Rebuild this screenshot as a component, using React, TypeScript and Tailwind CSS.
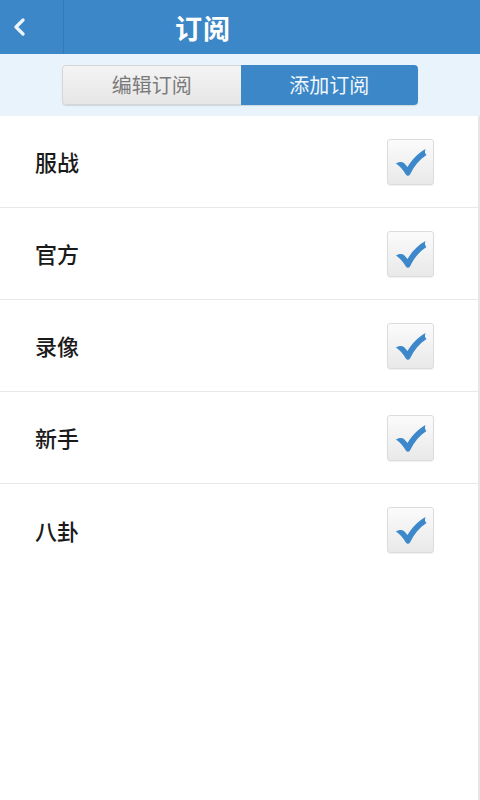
import React from "react";

const items = ["服战", "官方", "录像", "新手", "八卦"];

function CheckBox() {
  return (
    <div className="flex h-[46px] w-[47px] items-center justify-center rounded-[3px] border border-[#dcdcdc] bg-gradient-to-b from-[#fbfbfb] to-[#e9e9e9] shadow-[0_1px_1px_rgba(0,0,0,0.06)]">
      <svg width="34" height="30" viewBox="0 0 34 30" aria-hidden={true}>
        <path
          d="M2 16.5 C5 14.5 8 14.5 10 16 L13.5 20 C18 12.5 23.5 6.5 31.5 2 C30.5 4.5 31 7 32.5 8 C25.5 12.5 20 19 16 27.5 C15 29 13 29 12 27.8 C9 23 6 19 2 16.5 Z"
          fill="#3d87cb"
        />
      </svg>
    </div>
  );
}

export default function App() {
  return (
    <div
      className="flex min-h-[800px] w-[480px] flex-col bg-white"
      style={{ fontFamily: '"Noto Sans CJK SC", "Noto Sans", sans-serif' }}
    >
      <div className="flex h-[54px] items-stretch bg-[#3c87c7]">
        <div className="flex w-[64px] items-center border-r border-[#3579b5] pl-[12px]">
          <svg width="14" height="18" viewBox="0 0 14 18" aria-hidden={true}>
            <path
              d="M11 2 L4 9 L11 16"
              fill="none"
              stroke="#eef4fb"
              strokeWidth="3.2"
              strokeLinecap="round"
              strokeLinejoin="round"
            />
          </svg>
        </div>
        <div className="flex flex-1 items-center pl-[111px]">
          <span className="text-[27px] font-bold leading-none tracking-[1px] text-white">
            订阅
          </span>
        </div>
      </div>

      <div className="flex h-[62px] items-center justify-center bg-[#e8f3fb]">
        <div className="flex h-[40px] w-[356px] overflow-hidden rounded-[4px] shadow-[0_1px_1px_rgba(0,0,0,0.12)]">
          <div className="flex flex-1 items-center justify-center rounded-l-[4px] border border-r-0 border-[#d6d6d6] bg-gradient-to-b from-[#f4f4f4] to-[#e6e6e6] text-[20px] text-[#7a7a7a]">
            编辑订阅
          </div>
          <div className="flex flex-1 items-center justify-center bg-[#3c87c7] text-[20px] text-[#f2f7fc]">
            添加订阅
          </div>
        </div>
      </div>

      <div className="flex flex-1 flex-col border-r-2 border-[#e6e6e6]">
        {items.map((name, i) => (
          <div
            key={name}
            className={
              i === items.length - 1
                ? "flex h-[92px] items-center justify-between pl-[35px] pr-[44px]"
                : "flex h-[92px] items-center justify-between border-b border-[#e8e8e8] pl-[35px] pr-[44px]"
            }
          >
            <span className="text-[22px] font-medium text-[#1a1a1a]">{name}</span>
            <CheckBox />
          </div>
        ))}
      </div>
    </div>
  );
}
